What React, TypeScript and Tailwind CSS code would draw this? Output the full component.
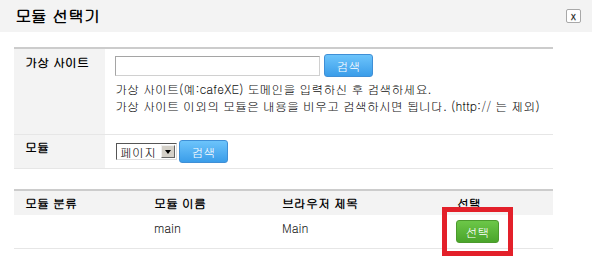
const font = "font-['Gulim','Noto_Sans_CJK_KR','Noto_Sans',sans-serif]"

function BlueButton({ className = "" }: { className?: string }) {
  return (
    <button
      className={`h-[23px] w-[49px] rounded-[3px] border border-[#3f8fd6] bg-gradient-to-b from-[#6cc4fb] to-[#3a9de9] text-[12px] leading-none text-white ${className}`}
    >
      검색
    </button>
  )
}

export default function App() {
  return (
    <div className={`relative h-[269px] w-[592px] overflow-hidden bg-white text-[#111] ${font}`}>
      {/* Header */}
      <div className="flex h-[32px] items-center justify-between bg-[#f3f3f3] pl-[15px] pr-[11px]">
        <h1 className="text-[16px] font-bold leading-none text-black">모듈 선택기</h1>
        <button className="flex h-[14px] w-[15px] items-center justify-center rounded-[2px] border border-[#a8a8a8] bg-white text-[10px] font-bold leading-none text-[#333]">
          x
        </button>
      </div>

      <div className="ml-[14px] mt-[15px] w-[539px]">
        {/* Search table */}
        <div className="border-t-2 border-[#cccccc]">
          <div className="flex h-[86px] border-b border-[#e6e6e6]">
            <div className="w-[91px] bg-[#f3f3f3] pl-[11px] pt-[6px] text-[12px] font-black leading-[14px] text-black">
              가상 사이트
            </div>
            <div className="flex-1 pl-[10px] pt-[5px]">
              <div className="flex items-center gap-[4px]">
                <div className="h-[20px] w-[205px] border border-[#a5a5a5] border-b-[#d0d0d0] border-r-[#d0d0d0] bg-white" />
                <BlueButton />
              </div>
              <div className="mt-[3px] text-[12px] leading-[17px] text-[#111]">
                <p>가상 사이트(예:cafeXE) 도메인을 입력하신 후 검색하세요.</p>
                <p>가상 사이트 이외의 모듈은 내용을 비우고 검색하시면 됩니다. (http:// 는 제외)</p>
              </div>
            </div>
          </div>
          <div className="flex h-[34px] border-b border-[#e6e6e6]">
            <div className="w-[91px] bg-[#f3f3f3] pl-[11px] pt-[5px] text-[12px] font-black leading-[14px] text-black">
              모듈
            </div>
            <div className="flex flex-1 items-center gap-[2px] self-start pl-[11px] pt-[5px]">
              <div className="flex h-[17px] w-[61px] items-center justify-between border border-[#555] border-b-[#ddd] border-r-[#ddd] bg-white pl-[3px] pr-px">
                <span className="text-[12px] leading-none">페이지</span>
                <span className="flex h-[13px] w-[14px] items-center justify-center border border-[#f0f0f0] border-b-[#666] border-r-[#666] bg-[#d4d0c8]">
                  <span className="h-0 w-0 border-x-[3px] border-t-[4px] border-x-transparent border-t-black" />
                </span>
              </div>
              <BlueButton />
            </div>
          </div>
        </div>

        {/* Result table */}
        <div className="mt-[20px] border-t-2 border-[#cccccc] text-[12px]">
          <div className="grid h-[24px] grid-cols-[129px_128px_175px_107px] items-center bg-[#f3f3f3] font-black text-black">
            <div className="pl-[11px]">모듈 분류</div>
            <div className="pl-[11px]">모듈 이름</div>
            <div className="pl-[11px]">브라우저 제목</div>
            <div className="pl-[11px]">선택</div>
          </div>
          <div className="grid h-[34px] grid-cols-[129px_128px_175px_107px] border-b border-[#e6e6e6]">
            <div />
            <div className="pl-[11px] pt-[6px] leading-[14px]">main</div>
            <div className="pl-[11px] pt-[6px] leading-[14px]">Main</div>
            <div className="pl-[10px] pt-[5px]">
              <button className="h-[23px] w-[43px] rounded-[3px] border border-[#4b9a2c] bg-gradient-to-b from-[#6cc748] to-[#4aa52a] text-[12px] leading-none text-white">
                선택
              </button>
            </div>
          </div>
        </div>
      </div>

      {/* Red highlight annotation */}
      <div className="pointer-events-none absolute left-[442px] top-[207px] h-[49px] w-[71px] border-[5px] border-[#e3202a]" />
    </div>
  )
}
